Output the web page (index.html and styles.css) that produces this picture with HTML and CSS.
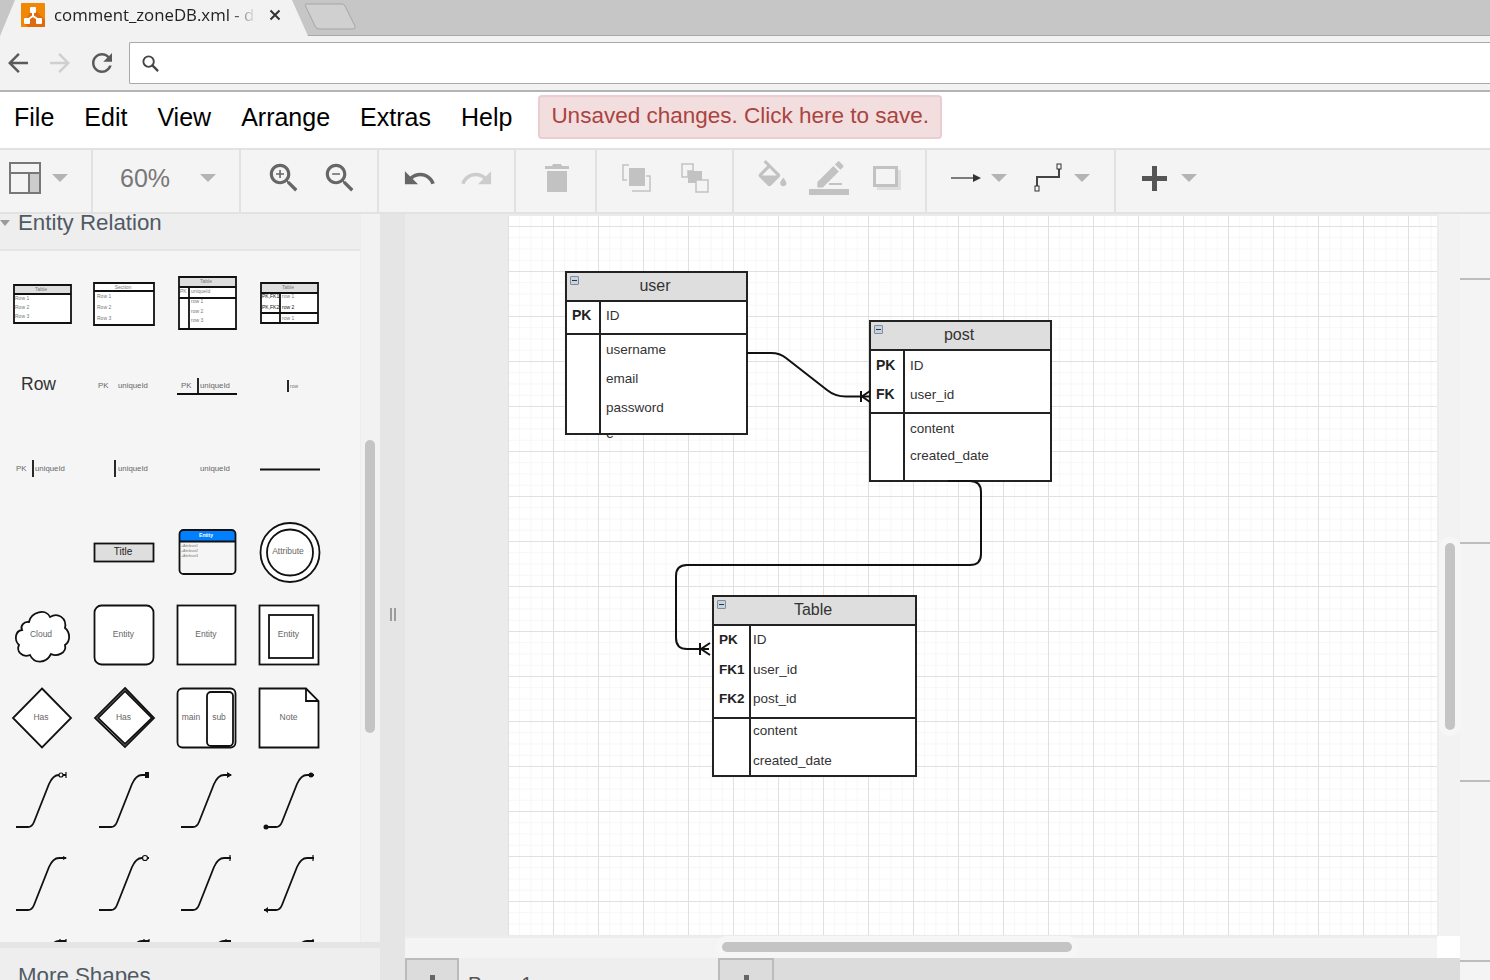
FILE: index.html
```html
<!DOCTYPE html>
<html lang="en">
<head>
  <meta charset="UTF-8">
  <title>comment_zoneDB.xml - draw.io</title>
  <link rel="stylesheet" href="styles.css">
</head>
<body>
  <!-- browser chrome -->
  <div class="tabstrip">
    <div class="tab">
      <svg class="favicon" width="24" height="24" viewBox="0 0 24 24">
        <rect width="24" height="24" rx="1" fill="#f08705"/>
        <path d="M24 24H7L3 20 10 8h5l9 9z" fill="#df6c0c"/>
        <path d="M12 9V13M12 13L6 17M12 13L18 17" stroke="#fff" stroke-width="2" fill="none"/>
        <rect x="9" y="4" width="6" height="6" rx="1" fill="#fff"/>
        <rect x="3" y="15" width="6" height="6" rx="1" fill="#fff"/>
        <rect x="15" y="15" width="6" height="6" rx="1" fill="#fff"/>
      </svg>
      <span class="tab-title">comment_zoneDB.xml - draw.io</span>
      <svg class="tab-close" width="12" height="12" viewBox="0 0 12 12"><path d="M1.5 1.5L10.5 10.5M10.5 1.5L1.5 10.5" stroke="#333" stroke-width="2"/></svg>
    </div>
    <svg class="new-tab" width="54" height="28" viewBox="0 0 54 28"><path d="M2 3Q2 2 4 2H39Q41 2 42 4L52 24Q53 27 50 27H16Q13 27 12 24z" fill="#d0d0d0" stroke="#a6a6a6"/></svg>
  </div>
  <div class="navbar">
    <svg width="30" height="30" viewBox="0 0 24 24"><path d="M20 11H7.800l5.600-5.600L12 4l-8 8 8 8 1.400-1.400L7.800 13H20z" fill="#5a5a5a"/></svg>
    <svg width="30" height="30" viewBox="0 0 24 24"><path d="M4 11h12.200l-5.600-5.600L12 4l8 8-8 8-1.400-1.400 5.600-5.600H4z" fill="#cfcfcf"/></svg>
    <svg width="30" height="30" viewBox="0 0 24 24"><path d="M17.650 6.350C16.200 4.900 14.210 4 12 4c-4.420 0-7.990 3.580-7.990 8s3.570 8 7.990 8c3.730 0 6.840-2.550 7.730-6h-2.080c-.82 2.330-3.040 4-5.650 4-3.310 0-6-2.690-6-6s2.690-6 6-6c1.660 0 3.140.69 4.220 1.780L13 11h7V4l-2.350 2.350z" fill="#5a5a5a"/></svg>
    <div class="address">
      <svg width="19" height="19" viewBox="0 0 20 20"><circle cx="8" cy="8" r="5.500" fill="none" stroke="#444" stroke-width="2"/><path d="M12 12l6 6" stroke="#444" stroke-width="2.400"/></svg>
    </div>
  </div>

  <!-- app menu -->
  <div class="menubar">
    <a class="menu-item">File</a>
    <a class="menu-item">Edit</a>
    <a class="menu-item">View</a>
    <a class="menu-item">Arrange</a>
    <a class="menu-item">Extras</a>
    <a class="menu-item">Help</a>
    <a class="save-notice">Unsaved changes. Click here to save.</a>
  </div>

  <div class="toolbar">
    <div class="tool-group group-view">
      <svg width="32" height="32" viewBox="0 0 32 32"><rect x="20" y="11" width="11" height="20" fill="#ccc"/><path d="M1 11H31M20 11V31" stroke="#777" stroke-width="2"/><rect x="1" y="1" width="30" height="30" fill="none" stroke="#777" stroke-width="2"/></svg>
      <i class="caret"></i>
    </div>
    <div class="tool-group group-zoom-value">
      <span class="zoom-value">60%</span>
      <i class="caret"></i>
    </div>
    <div class="tool-group group-zoom">
      <svg width="38" height="38" viewBox="0 0 24 24"><path fill="#666" d="M15.500 14h-.79l-.28-.27C15.410 12.590 16 11.110 16 9.500 16 5.910 13.090 3 9.500 3S3 5.910 3 9.500 5.910 16 9.500 16c1.610 0 3.090-.59 4.230-1.570l.27.280v.79l5 4.990L20.490 19l-4.990-5zm-6 0C7.010 14 5 11.990 5 9.500S7.010 5 9.500 5 14 7.010 14 9.500 11.990 14 9.500 14zM12 10h-2v2H9v-2H7V9h2V7h1v2h2v1z"/></svg>
      <svg width="38" height="38" viewBox="0 0 24 24"><path fill="#666" d="M15.500 14h-.79l-.28-.27C15.410 12.590 16 11.110 16 9.500 16 5.910 13.090 3 9.500 3S3 5.910 3 9.500 5.910 16 9.500 16c1.610 0 3.090-.59 4.230-1.570l.27.280v.79l5 4.990L20.490 19l-4.990-5zm-6 0C7.010 14 5 11.990 5 9.500S7.010 5 9.500 5 14 7.010 14 9.500 11.990 14 9.500 14zM7 9h5v1H7z"/></svg>
    </div>
    <div class="tool-group group-undo">
      <svg width="35" height="35" viewBox="0 0 24 24"><path fill="#666" d="M12.500 8c-2.650 0-5.050.99-6.900 2.600L2 7v9h9l-3.620-3.620c1.390-1.160 3.160-1.880 5.120-1.880 3.540 0 6.550 2.310 7.600 5.500l2.370-.78C21.080 11.030 17.150 8 12.500 8z"/></svg>
      <svg width="35" height="35" viewBox="0 0 24 24"><path fill="#ccc" d="M18.400 10.600C16.550 8.990 14.150 8 11.500 8c-4.650 0-8.580 3.030-9.960 7.220L3.900 16c1.050-3.190 4.050-5.500 7.600-5.500 1.950 0 3.730.72 5.120 1.880L13 16h9V7l-3.600 3.600z"/></svg>
    </div>
    <div class="tool-group group-delete">
      <svg width="26" height="30" viewBox="0 0 26 30"><path fill="#c2c2c2" d="M3 8H23V29H3zM1 3H8L9 1H17L18 3H25V6H1z"/></svg>
    </div>
    <div class="tool-group group-order">
      <svg width="30" height="30" viewBox="0 0 30 30"><rect x="7" y="5" width="16" height="18" fill="#c2c2c2"/><path d="M7 2H1V17H5M24 28H28V13H24M10 28H24" fill="none" stroke="#c2c2c2" stroke-width="1.500"/></svg>
      <svg width="30" height="30" viewBox="0 0 30 30"><path d="M2 1H13V8H8V14H2z" fill="#f4f4f4" stroke="#c2c2c2" stroke-width="1.500"/><rect x="8" y="8" width="14" height="12" fill="#c2c2c2"/><rect x="16" y="17" width="12" height="12" fill="#f4f4f4" stroke="#c2c2c2" stroke-width="1.500"/></svg>
    </div>
    <div class="tool-group group-style">
      <svg width="37" height="37" viewBox="0 0 24 24"><path fill="#c2c2c2" d="M16.560 8.940L7.620 0 6.210 1.410l2.380 2.380-5.150 5.150c-.59.59-.59 1.540 0 2.120l5.500 5.500c.29.29.68.44 1.060.44s.77-.15 1.060-.44l5.500-5.500c.59-.58.59-1.530 0-2.120zM5.210 10L10 5.210 14.790 10H5.210zM19 11.500s-2 2.170-2 3.500c0 1.100.9 2 2 2s2-.9 2-2c0-1.330-2-3.500-2-3.500z"/></svg>
      <svg width="40" height="36" viewBox="0 0 40 36"><path fill="#c2c2c2" transform="translate(4 -3) scale(1.45)" d="M3 17.250V21h3.750L17.810 9.940l-3.750-3.750L3 17.250zM20.710 7.040c.39-.39.39-1.020 0-1.410l-2.340-2.340c-.39-.39-1.020-.39-1.410 0l-1.830 1.830 3.750 3.750 1.830-1.830z"/><path fill="#c2c2c2" d="M20 23H33V25H20zM0 29H40V35H0z"/></svg>
      <svg class="shadow-icon" width="28" height="24" viewBox="0 0 28 24"><path fill="#dedede" d="M4 4H28V24H4z"/><rect x="1.500" y="1.500" width="22" height="18" fill="#f4f4f4" stroke="#c2c2c2" stroke-width="3"/></svg>
    </div>
    <div class="tool-group group-lines">
      <svg width="30" height="12" viewBox="0 0 30 12"><path d="M0 6H26" stroke="#555" stroke-width="1.500"/><path d="M22 2L30 6 22 10z" fill="#333"/></svg>
      <i class="caret"></i>
      <svg class="waypoint" width="30" height="30" viewBox="0 0 30 30"><path d="M3 25V14H25V4" fill="none" stroke="#444" stroke-width="2"/><rect x="1" y="23" width="4" height="5" fill="#f4f4f4" stroke="#333"/><rect x="23" y="1" width="4" height="5" fill="#f4f4f4" stroke="#333"/></svg>
      <i class="caret"></i>
    </div>
    <div class="tool-group group-insert">
      <svg width="25" height="25" viewBox="0 0 25 25"><path fill="#555" d="M10 0H15V10H25V15H15V25H10V15H0V10H10z"/></svg>
      <i class="caret"></i>
    </div>
  </div>

  <div class="workspace">
    <aside class="sidebar">
      <div class="sidebar-scroll">
        <div class="sidebar-body">
          <div class="section-head head-open"><i class="head-caret"></i>Entity Relation</div>
          <div class="palette">
            <!-- row 1 -->
            <svg class="shape" viewBox="1 261 83 83">
              <rect class="fill-head" x="14" y="285" width="57" height="9"/><rect class="fill-white" x="14" y="294" width="57" height="29"/>
              <path class="line" d="M14 285H71V323H14zM14 294H71"/>
              <text class="tiny c" x="41" y="291">Table</text><text class="tiny" x="15" y="300">Row 1</text><text class="tiny" x="15" y="309">Row 2</text><text class="tiny" x="15" y="318">Row 3</text>
            </svg>
            <svg class="shape" viewBox="84 261 83 83">
              <rect class="fill-white" x="94" y="283" width="60" height="42"/>
              <path class="line" d="M94 283H154V325H94zM94 291H154"/>
              <text class="tiny c" x="123" y="289">Section</text><text class="tiny" x="97" y="298">Row 1</text><text class="tiny" x="97" y="309">Row 2</text><text class="tiny" x="97" y="320">Row 3</text>
            </svg>
            <svg class="shape" viewBox="167 261 83 83">
              <rect class="fill-head" x="179" y="277" width="57" height="10"/><rect class="fill-white" x="179" y="287" width="57" height="42"/>
              <path class="line" d="M179 277H236V329H179zM179 287H236M179 298H236M189 287V330"/>
              <text class="tiny c" x="206" y="283">Table</text><text class="tiny" x="180" y="293">PK</text><text class="tiny" x="191" y="293">uniqueId</text><text class="tiny" x="191" y="303">row 1</text><text class="tiny" x="191" y="313">row 2</text><text class="tiny" x="191" y="322">row 3</text>
            </svg>
            <svg class="shape" viewBox="250 261 83 83">
              <rect class="fill-head" x="261" y="283" width="57" height="10"/><rect class="fill-white" x="261" y="293" width="57" height="30"/>
              <path class="line" d="M261 283H318V323H261zM261 293H318M261 313H318M280 293V323"/>
              <text class="tiny c" x="288" y="289">Table</text><text class="tiny dark" x="262" y="298">PK,FK1</text><text class="tiny dark" x="262" y="309">PK,FK2</text><text class="tiny" x="282" y="298">row 1</text><text class="tiny dark" x="282" y="309">row 2</text><text class="tiny" x="282" y="320">row 1</text>
            </svg>
            <!-- row 2 -->
            <svg class="shape" viewBox="1 344 83 83"><text class="row-label" x="21" y="390">Row</text></svg>
            <svg class="shape" viewBox="84 344 83 83"><text class="uid" x="98" y="388">PK</text><text class="uid" x="118" y="388">uniqueId</text></svg>
            <svg class="shape" viewBox="167 344 83 83">
              <text class="uid" x="181" y="388">PK</text><text class="uid" x="200" y="388">uniqueId</text>
              <path class="line" d="M198 378V394M177 394H237"/>
            </svg>
            <svg class="shape" viewBox="250 344 83 83"><path class="line" d="M288 380V392"/><text class="tiny" x="290" y="388">row</text></svg>
            <!-- row 3 -->
            <svg class="shape" viewBox="1 427 83 83">
              <text class="uid" x="16" y="471">PK</text><text class="uid" x="35" y="471">uniqueId</text><path class="line" d="M33 460V477"/>
            </svg>
            <svg class="shape" viewBox="84 427 83 83"><text class="uid" x="118" y="471">uniqueId</text><path class="line" d="M115 460V477"/></svg>
            <svg class="shape" viewBox="167 427 83 83"><text class="uid" x="200" y="471">uniqueId</text></svg>
            <svg class="shape" viewBox="250 427 83 83"><path class="line" d="M260 469.500H320"/></svg>
            <!-- row 4 -->
            <svg class="shape" viewBox="1 510 83 83"></svg>
            <svg class="shape" viewBox="84 510 83 83">
              <rect class="fill-head line" x="94.500" y="543.500" width="59" height="18"/>
              <text class="title-label c" x="123" y="555">Title</text>
            </svg>
            <svg class="shape" viewBox="167 510 83 83">
              <path d="M179 541V535Q179 530 184 530H231Q236 530 236 535V541z" fill="#0080ff"/>
              <rect class="line" x="179.500" y="530" width="56" height="44" rx="4"/>
              <path class="line" d="M179 541.500H236"/>
              <text class="entity-name c" x="206" y="537">Entity</text>
              <text class="micro" x="181" y="547">+Attribute1</text><text class="micro" x="181" y="552">+Attribute2</text><text class="micro" x="181" y="557">+Attribute3</text>
            </svg>
            <svg class="shape" viewBox="250 510 83 83">
              <circle class="fill-white line" cx="290" cy="552.500" r="29.500"/><circle class="line" cx="290" cy="552.500" r="23"/>
              <text class="small c" x="288" y="554">Attribute</text>
            </svg>
            <!-- row 5 -->
            <svg class="shape" viewBox="1 593 83 83">
              <path class="fill-white line" d="M29 622C31 612 46 608 50 617 58 612 67 618 65 628 70 632 71 641 65 645 67 653 57 657 51 654 46 664 34 664 30 655 22 658 16 651 19 645 14 640 15 631 22 630 20 626 24 621 29 622z"/>
              <text class="small c" x="41" y="637">Cloud</text>
            </svg>
            <svg class="shape" viewBox="84 593 83 83"><rect class="fill-white line" x="94.500" y="605.500" width="59" height="59" rx="7"/><text class="small c" x="123.500" y="637">Entity</text></svg>
            <svg class="shape" viewBox="167 593 83 83"><rect class="fill-white line" x="177.500" y="605.500" width="58" height="59"/><text class="small c" x="206" y="637">Entity</text></svg>
            <svg class="shape" viewBox="250 593 83 83"><rect class="fill-white line" x="259.500" y="605.500" width="59" height="59"/><rect class="line" x="269" y="615" width="44" height="43"/><text class="small c" x="288.500" y="637">Entity</text></svg>
            <!-- row 6 -->
            <svg class="shape" viewBox="1 676 83 83"><path class="fill-white line" d="M42 688.500L71 718 42 747.500 13 718z"/><text class="small c" x="41" y="720">Has</text></svg>
            <svg class="shape" viewBox="84 676 83 83"><path class="fill-white line" d="M125 688L154 718 125 747 95 718z"/><path class="line" d="M125 691L152 718 125 744 98 718z"/><text class="small c" x="123.500" y="720">Has</text></svg>
            <svg class="shape" viewBox="167 676 83 83">
              <rect class="fill-white line" x="177.500" y="688.500" width="58" height="59" rx="5"/><rect class="fill-white line" x="207" y="692" width="26" height="54" rx="4"/>
              <text class="small c" x="191" y="720">main</text><text class="small c" x="219" y="720">sub</text>
            </svg>
            <svg class="shape" viewBox="250 676 83 83">
              <path class="fill-white line" d="M259.500 688.500H306L318.500 701V747.500H259.500z"/><path class="line" d="M306 688.500V701H318.500"/>
              <text class="small c" x="288.500" y="720">Note</text>
            </svg>
            <!-- row 7 -->
            <svg class="shape" viewBox="1 759 83 83"><use href="#edge" x="16" y="775"/><circle class="fill-shape-bg line-thin" cx="61" cy="775" r="2"/><path class="line-thin" d="M66 772V778"/></svg>
            <svg class="shape" viewBox="84 759 83 83"><use href="#edge" x="99" y="775"/><rect x="145" y="772" width="4" height="6" fill="#111"/></svg>
            <svg class="shape" viewBox="167 759 83 83"><use href="#edge" x="181" y="775"/><path d="M227 772L232 775 227 778z" fill="#111"/></svg>
            <svg class="shape" viewBox="250 759 83 83"><use href="#edge" x="264" y="775"/><circle cx="311" cy="775" r="2.500" fill="#111"/><circle cx="266" cy="827" r="2.500" fill="#111"/></svg>
            <!-- row 8 -->
            <svg class="shape" viewBox="1 842 83 83"><use href="#edge" x="16" y="858"/><path d="M63 856L67 858 63 860z" fill="#111"/></svg>
            <svg class="shape" viewBox="84 842 83 83"><use href="#edge" x="99" y="858"/><circle class="fill-shape-bg line-thin" cx="145" cy="858" r="2.500"/></svg>
            <svg class="shape" viewBox="167 842 83 83"><use href="#edge" x="181" y="858"/><path class="line-thin" d="M230 855V861"/></svg>
            <svg class="shape" viewBox="250 842 83 83"><use href="#edge" x="264" y="858"/><path class="line-thin" d="M313 855V861"/><path d="M264 910L268 907V913z" fill="#111"/></svg>
            <!-- row 9, cut off by the section below -->
            <svg class="shape" viewBox="1 925 83 83"><use href="#edge" x="16" y="941"/><path class="line-thin" d="M60 939V943M66 939V943"/></svg>
            <svg class="shape" viewBox="84 925 83 83"><use href="#edge" x="99" y="941"/><path class="line-thin" d="M144 939V943M149 939V943"/></svg>
            <svg class="shape" viewBox="167 925 83 83"><use href="#edge" x="181" y="941"/><path class="line-thin" d="M226 939V943"/></svg>
            <svg class="shape" viewBox="250 925 83 83"><use href="#edge" x="264" y="941"/><path class="line-thin" d="M313 939V943"/></svg>
          </div>
        </div>
        <div class="sidebar-track"><div class="scroll-thumb thumb-sidebar"></div></div>
      </div>
      <div class="section-gap"></div>
      <div class="section-head head-closed">More Shapes</div>
    </aside>

    <div class="splitter"><i></i><i></i></div>

    <main class="editor">
      <div class="canvas">
        <div class="page">
          <span class="stray-text">e</span>

          <div class="entity entity-user">
            <i class="collapse"></i>
            <div class="entity-head">user</div>
            <div class="entity-section keys">
              <div class="key-col"><div class="cell">PK</div></div>
              <div class="val-col"><div class="cell">ID</div></div>
            </div>
            <div class="entity-section rest">
              <div class="key-col"></div>
              <div class="val-col">
                <div class="cell">username</div>
                <div class="cell">email</div>
                <div class="cell">password</div>
              </div>
            </div>
          </div>

          <div class="entity entity-post">
            <i class="collapse"></i>
            <div class="entity-head">post</div>
            <div class="entity-section keys">
              <div class="key-col"><div class="cell">PK</div><div class="cell">FK</div></div>
              <div class="val-col"><div class="cell">ID</div><div class="cell">user_id</div></div>
            </div>
            <div class="entity-section rest">
              <div class="key-col"></div>
              <div class="val-col">
                <div class="cell">content</div>
                <div class="cell">created_date</div>
              </div>
            </div>
          </div>

          <div class="entity entity-table">
            <i class="collapse"></i>
            <div class="entity-head">Table</div>
            <div class="entity-section keys">
              <div class="key-col"><div class="cell">PK</div><div class="cell">FK1</div><div class="cell">FK2</div></div>
              <div class="val-col"><div class="cell">ID</div><div class="cell">user_id</div><div class="cell">post_id</div></div>
            </div>
            <div class="entity-section rest">
              <div class="key-col"></div>
              <div class="val-col">
                <div class="cell">content</div>
                <div class="cell">created_date</div>
              </div>
            </div>
          </div>

          <!-- connectors, in screen coordinates -->
          <svg class="connectors" viewBox="508 216 929 719">
            <path d="M747 353H771Q780 353 786 358L827 390Q835 396.500 846 396.500H870"/>
            <path d="M861 391V402M870 391L862 396.500 870 402"/>
            <path d="M948 481H970Q981 481 981 492V554Q981 565 970 565H687Q676 565 676 576V638Q676 649 687 649H709"/>
            <path d="M700 643V655M710 643L701 649 710 655"/>
          </svg>
        </div>
      </div>
      <div class="vscroll"><div class="scroll-thumb thumb-v"></div></div>
      <div class="hscroll"><div class="scroll-thumb thumb-h"></div></div>
      <div class="scroll-corner"></div>
      <div class="page-tabs">
        <div class="page-btn"><i class="plus"></i></div>
        <div class="page-tab">Page-1</div>
        <div class="page-btn btn-last"><i class="plus"></i></div>
      </div>
    </main>

    <div class="format-panel">
      <div class="format-row row-a"></div>
      <div class="format-row row-b"></div>
      <div class="format-row row-c"></div>
      <div class="format-row row-d"></div>
    </div>
  </div>

  <svg class="defs" width="0" height="0">
    <symbol id="edge" width="52" height="54" viewBox="0 0 52 54" overflow="visible">
      <path d="M0 52H12Q16 52 18 47L33 9Q37 0 43 0H50" fill="none" stroke="#111" stroke-width="1.800"/>
    </symbol>
  </svg>
</body>
</html>
```

FILE: styles.css
```css
* {
  box-sizing: border-box;
}
html, body {
  margin: 0;
  height: 100%;
  overflow: hidden;
}
body {
  width: 1490px;
  height: 980px;
  font-family: "Liberation Sans", Arial, sans-serif;
  background: #fff;
}
svg {
  display: block;
  flex: none;
}
.defs {
  position: absolute;
}

/* browser chrome */
.tabstrip {
  height: 36px;
  background: #c6c6c6;
  border-bottom: 1px solid #a9a9a9;
  display: flex;
}
.tab {
  width: 308px;
  height: 36px;
  flex: none;
  padding-left: 21px;
  background: #f2f2f2;
  display: flex;
  align-items: flex-start;
  clip-path: polygon(15px 0, 292px 0, 308px 36px, 0 36px);
}
.favicon {
  margin-top: 3px;
}
.tab-title {
  width: 202px;
  margin-left: 9px;
  padding-top: 3px;
  font: 16.8px/24px "Open Sans", sans-serif;
  color: #222;
  white-space: nowrap;
  overflow: hidden;
  -webkit-mask-image: linear-gradient(to right, #000 176px, transparent 202px);
  mask-image: linear-gradient(to right, #000 176px, transparent 202px);
}
.tab-close {
  margin: 9px 0 0 13px;
}
.new-tab {
  margin: 2px 0 0 -5px;
}
.navbar {
  height: 56px;
  padding-left: 3px;
  background: #f2f2f2;
  border-bottom: 2px solid #b4b4b4;
  display: flex;
  align-items: center;
  gap: 12px;
}
.address {
  flex: 1;
  height: 42px;
  padding-left: 11px;
  background: #fff;
  border: 1px solid #a9a9a9;
  border-right: 0;
  border-radius: 2px 0 0 2px;
  display: flex;
  align-items: center;
}

/* menu */
.menubar {
  height: 56px;
  padding: 0 0 0 14px;
  background: #fff;
  display: flex;
  align-items: center;
  gap: 30px;
}
.menu-item {
  font-size: 25px;
  color: #000;
  margin-top: -6px;
}
.save-notice {
  margin: -6px 0 0 -4px;
  width: 404px;
  height: 44px;
  padding: 0 0 3px 11px;
  display: flex;
  align-items: center;
  font-size: 22.5px;
  color: #a94442;
  background: #f2dede;
  border: 2px solid #ebccd1;
  border-radius: 4px;
  white-space: nowrap;
}

/* toolbar */
.toolbar {
  height: 66px;
  background: #f4f4f4;
  border-top: 2px solid #e2e2e2;
  border-bottom: 2px solid #e2e2e2;
  display: flex;
}
.tool-group {
  height: 100%;
  flex: none;
  border-right: 2px solid #e2e2e2;
  display: flex;
  align-items: center;
  padding-bottom: 6px;
}
.caret {
  flex: none;
  width: 0;
  height: 0;
  border-left: 8px solid transparent;
  border-right: 8px solid transparent;
  border-top: 8px solid #b4b4b4;
}
.group-view { width: 93px; padding-left: 9px; gap: 11px; }
.group-zoom-value { width: 148px; padding-left: 27px; gap: 30px; }
.zoom-value { font-size: 25px; color: #777; }
.group-zoom { width: 138px; padding-left: 24px; gap: 18px; }
.group-undo { width: 137px; padding-left: 23px; gap: 22px; }
.group-delete { width: 81px; padding-left: 28px; }
.group-order { width: 137px; padding-left: 25px; gap: 28px; }
.group-style { width: 193px; padding-left: 20px; gap: 18px; }
.group-style .shadow-icon { margin-left: 6px; }
.group-lines { width: 189px; padding-left: 24px; gap: 10px; }
.group-lines .waypoint { margin-left: 17px; }
.group-insert { width: 100px; padding-left: 26px; gap: 14px; border-right: 0; }

/* workspace */
.workspace {
  height: 766px;
  display: flex;
}
.sidebar {
  width: 380px;
  flex: none;
  height: 100%;
  display: flex;
  flex-direction: column;
  overflow: hidden;
}
.sidebar-scroll {
  height: 728px;
  flex: none;
  display: flex;
}
.sidebar-body {
  width: 360px;
  flex: none;
  background: #f5f5f5;
  overflow: hidden;
}
.sidebar-track {
  flex: 1;
  background: #f2f2f2;
  border-left: 1px solid #ededed;
  position: relative;
}
.section-head {
  background: #eeeeee;
  color: #505a64;
  font-size: 22.3px;
  white-space: nowrap;
  overflow: hidden;
}
.head-open {
  height: 37px;
  padding-left: 18px;
  line-height: 18px;
  border-bottom: 2px solid #e5e5e5;
  position: relative;
}
.head-caret {
  position: absolute;
  left: 0;
  top: 6px;
  border-left: 5px solid transparent;
  border-right: 5px solid transparent;
  border-top: 6px solid #9a9a9a;
}
.head-closed {
  flex: 1;
  padding: 16px 0 0 18px;
  line-height: 24px;
}
.section-gap {
  height: 6px;
  flex: none;
  background: #e5e5e5;
}
.palette {
  height: 691px;
  padding: 10px 0 0 1px;
  display: grid;
  grid-template-columns: repeat(4, 83px);
  grid-auto-rows: 83px;
  overflow: hidden;
}
.shape {
  width: 83px;
  height: 83px;
}
.fill-white { fill: #fff; }
.fill-head { fill: #dedede; }
.fill-shape-bg { fill: #f5f5f5; }
.line { fill: none; stroke: #111; stroke-width: 1.8; }
.fill-white.line { fill: #fff; }
.fill-head.line { fill: #dedede; }
.line-thin { stroke: #111; stroke-width: 1.2; }
.tiny { font-size: 5px; fill: #777; }
.tiny.dark { fill: #111; }
.small { font-size: 8.5px; fill: #666; }
.uid { font-size: 7.8px; fill: #666; }
.micro { font-size: 3.5px; fill: #777; }
.row-label { font-size: 17.5px; fill: #333; }
.title-label { font-size: 10px; fill: #222; }
.entity-name { font-size: 5px; font-weight: bold; fill: #fff; }
.c { text-anchor: middle; }

.splitter {
  width: 25px;
  flex: none;
  height: 100%;
  padding-top: 34px;
  background: #e5e5e5;
  display: flex;
  align-items: center;
  justify-content: center;
  gap: 2px;
}
.splitter i {
  width: 2px;
  height: 13px;
  background: #9c9c9c;
}

/* editor */
.editor {
  width: 1055px;
  flex: none;
  height: 100%;
  display: grid;
  grid-template-columns: 1032px 23px;
  grid-template-rows: 722px 22px 22px;
  background: #ebebeb;
}
.canvas {
  padding: 2px 0 1px 103px;
  background: #ebebeb;
}
.page {
  width: 929px;
  height: 719px;
  position: relative;
  background-color: #fff;
  background-image:
    linear-gradient(#e0e0e0 1px, transparent 1px),
    linear-gradient(90deg, #e0e0e0 1px, transparent 1px),
    linear-gradient(#f6f6f6 1px, transparent 1px),
    linear-gradient(90deg, #f6f6f6 1px, transparent 1px);
  background-size: 45px 45px, 45px 45px, 11.25px 11.25px, 11.25px 11.25px;
  background-position: 0 10px, 0 0, 0 10px, 0 0;
  overflow: hidden;
}
.vscroll {
  background: #f2f2f2;
  border-left: 2px solid #ededed;
  position: relative;
}
.hscroll {
  background: #f4f4f4;
  border-top: 2px solid #ededed;
  position: relative;
}
.scroll-corner {
  background: #fff;
}
.scroll-thumb {
  position: absolute;
  background: #c4c4c4;
  border-radius: 5px;
  box-shadow: 0 0 0 6px #f6f6f6;
}
.thumb-sidebar { left: 4px; top: 226px; width: 10px; height: 293px; box-shadow: none; }
.thumb-v { left: 6px; top: 329px; width: 10px; height: 187px; }
.thumb-h { left: 317px; top: 4px; width: 350px; height: 10px; }
.page-tabs {
  grid-column: 1 / 3;
  background: #dcdcdc;
  display: flex;
  overflow: hidden;
}
.page-btn {
  width: 54px;
  flex: none;
  background: #dcdcdc;
  border: 2px solid #bbb;
  border-bottom: 0;
  display: flex;
  justify-content: center;
}
.btn-last {
  width: 56px;
}
.plus {
  width: 5px;
  height: 8px;
  margin-top: 15px;
  background: #666;
}
.page-tab {
  width: 259px;
  flex: none;
  padding: 16px 0 0 9px;
  background: #eeeeee;
  font-size: 20px;
  line-height: 20px;
  color: #555;
  white-space: nowrap;
}

/* right hand format panel */
.format-panel {
  flex: 1;
  height: 100%;
  background: #f4f4f4;
  display: flex;
  flex-direction: column;
}
.format-row { border-bottom: 2px solid #bdbdbd; flex: none; }
.row-a { height: 66px; }
.row-b { height: 264px; }
.row-c { height: 238px; }
.row-d { height: 180px; }

/* diagram */
.entity {
  position: absolute;
  background: #fff;
  border: 2px solid #222;
  display: flex;
  flex-direction: column;
  font-size: 13.5px;
  color: #333;
}
.entity-user { left: 57px; top: 55px; width: 183px; height: 164px; --key: 34px; }
.entity-post { left: 361px; top: 104px; width: 183px; height: 162px; --key: 34px; }
.entity-table { left: 204px; top: 379px; width: 205px; height: 182px; --key: 37px; }
.entity-head {
  height: 29px;
  flex: none;
  padding: 0 3px 2px 0;
  background: #dedede;
  border-bottom: 2px solid #222;
  font-size: 16px;
  line-height: 26px;
  text-align: center;
}
.collapse {
  position: absolute;
  left: 3px;
  top: 3px;
  width: 9px;
  height: 9px;
  background: #c6d4e2;
  border: 1px solid #7c8c9c;
  border-radius: 1px;
}
.collapse::after {
  content: "";
  display: block;
  width: 5px;
  height: 1px;
  margin: 3px 1px;
  background: #333;
}
.entity-section {
  display: flex;
  min-height: 0;
  overflow: hidden;
}
.entity-section.keys {
  flex: none;
  border-bottom: 2px solid #222;
}
.entity-section.rest {
  flex: 1;
}
.key-col {
  width: var(--key);
  flex: none;
  border-right: 2px solid #222;
  font-size: 14px;
  font-weight: bold;
  color: #222;
  overflow: hidden;
}
.entity-table .key-col {
  font-size: 13.5px;
}
.val-col {
  flex: 1;
}
.cell {
  height: var(--row);
  line-height: var(--line);
  white-space: nowrap;
}
.key-col .cell { padding-left: 5px; }
.val-col .cell { padding-left: 5px; }
.entity-user .keys { --row: 31px; --line: 27px; height: 33px; }
.entity-user .rest { --row: 29px; --line: 29px; }
.entity-post .keys { --row: 29px; --line: 29px; height: 63px; }
.entity-post .rest { --row: 27px; --line: 29px; }
.entity-table .keys { --row: 29.5px; --line: 28px; height: 93px; }
.entity-table .rest { --row: 24px; --line: 24px; }
.entity-table .rest .cell { margin-bottom: 6px; }
.entity-table .val-col .cell { padding-left: 2px; }
.stray-text {
  position: absolute;
  left: 98px;
  top: 209px;
  font-size: 14px;
  line-height: 16px;
  color: #333;
}
.connectors {
  position: absolute;
  left: 0;
  top: 0;
  width: 929px;
  height: 719px;
  pointer-events: none;
}
.connectors path {
  fill: none;
  stroke: #111;
  stroke-width: 2;
}
```
